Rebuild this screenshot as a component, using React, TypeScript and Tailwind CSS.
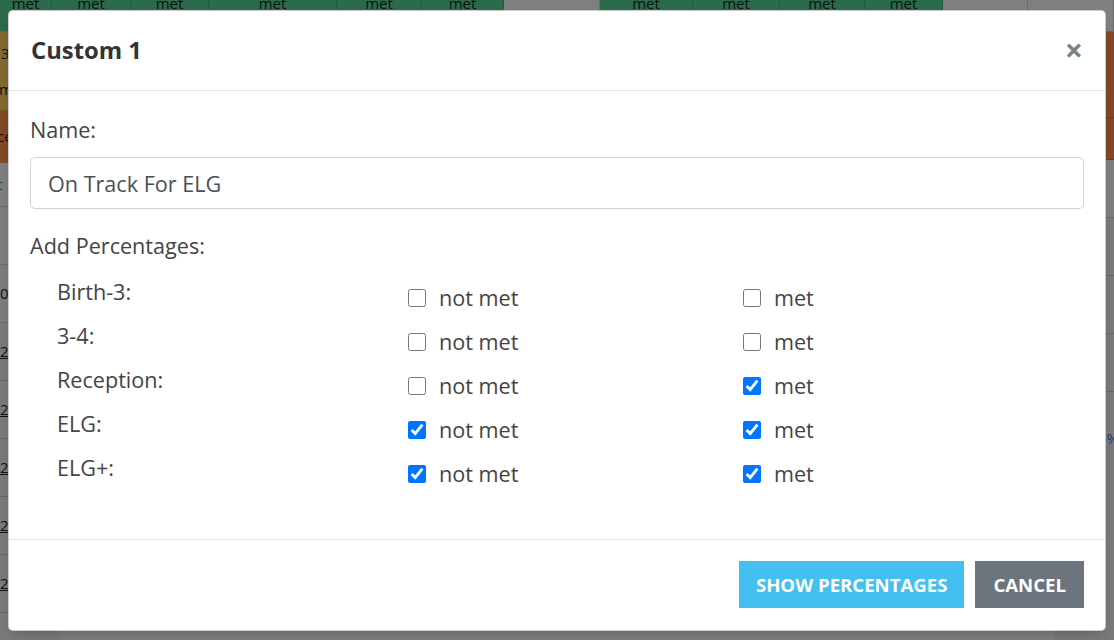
import React from 'react'

const topCells = [
  { w: 'w-[52px]', green: true },
  { w: 'w-[79px]', green: true },
  { w: 'w-[78px]', green: true },
  { w: 'w-[128px]', green: true },
  { w: 'w-[85px]', green: true },
  { w: 'w-[82px]', green: true },
  { w: 'w-[96px]', green: false },
  { w: 'w-[93px]', green: true },
  { w: 'w-[87px]', green: true },
  { w: 'w-[85px]', green: true },
  { w: 'w-[78px]', green: true },
  { w: 'w-[85px]', green: false },
  { w: 'w-[86px]', green: false },
]

const rows = [
  { label: 'Birth-3:', notMet: false, met: false },
  { label: '3-4:', notMet: false, met: false },
  { label: 'Reception:', notMet: false, met: true },
  { label: 'ELG:', notMet: true, met: true },
  { label: 'ELG+:', notMet: true, met: true },
]

function Check({ checked, text }: { checked: boolean; text: string }) {
  return (
    <label className="flex items-center gap-[13px] leading-[32px]">
      <input type="checkbox" defaultChecked={checked} className="w-[18px] h-[18px] m-0" />
      <span>{text}</span>
    </label>
  )
}

function Backdrop() {
  return (
    <div className="flex flex-col">
      {/* top row of the table, scrolled partly out of view */}
      <div className="flex h-[32px] border-b border-black/20">
        {topCells.map((c, i) => (
          <div
            key={i}
            className={`${c.w} h-full border-r border-black/15 text-center text-[15px] leading-[15px] text-[#111] ${c.green ? 'bg-[#2b6a4b]' : 'bg-[#7f7f7f]'}`}
          >
            {c.green && <div className="-mt-[4px]">met</div>}
          </div>
        ))}
      </div>

      <div className="flex">
        {/* left column */}
        <div className="w-[60px] flex flex-col text-[15px] text-[#111]">
          <div className="h-[78px] bg-[#806a30] flex flex-col justify-between py-[12px] pl-[1px]">
            <span className="leading-[18px]">3</span>
            <span className="leading-[18px] -ml-[2px]">m</span>
          </div>
          <div className="h-[53px] bg-[#804a28] flex items-center -ml-[3px]">ce</div>
          <div className="h-[44px] bg-[#7f7f7f] border-b border-black/15 flex items-center text-[#1d3f6b] -ml-[3px]">t</div>
          <div className="h-[58px] bg-[#7f7f7f] border-b border-black/15"></div>
          <div className="h-[58px] bg-[#7d7d7d] border-b border-black/15 flex items-center">0</div>
          {[0, 1, 2, 3, 4].map((i) => (
            <div key={i} className="h-[58px] bg-[#7a7a7a] border-b border-black/15 flex items-center underline">
              2
            </div>
          ))}
          <div className="h-[40px] bg-[#7a7a7a]"></div>
        </div>

        <div className="flex-1 bg-[#7f7f7f]"></div>

        {/* right column */}
        <div className="w-[60px] flex flex-col text-[15px] text-[#1d3f6b]">
          <div className="h-[86px] bg-[#804a28] border-b border-black/20"></div>
          <div className="h-[42px] bg-[#804a28] border-b border-black/20"></div>
          <div className="h-[58px] bg-[#7f7f7f] border-b border-black/15"></div>
          <div className="h-[58px] bg-[#7a7a7a] border-b border-black/15"></div>
          <div className="h-[58px] bg-[#7a7a7a] border-b border-black/15"></div>
          <div className="h-[58px] bg-[#7a7a7a] border-b border-black/15"></div>
          <div className="h-[92px] bg-[#7a7a7a] flex items-center pl-[44px] whitespace-nowrap">0%</div>
          <div className="h-[200px] bg-[#7a7a7a]"></div>
        </div>
      </div>
    </div>
  )
}

export default function App() {
  return (
    <div className="relative w-[1114px] h-[640px] overflow-hidden bg-[#7f7f7f] font-['Open_Sans',sans-serif]">
      <Backdrop />

      {/* Modal */}
      <div className="absolute left-[8px] top-[10px] w-[1098px] bg-white rounded-[5px] border border-black/20 shadow-lg text-[#444] text-[21.6px]">
        {/* Header */}
        <div className="h-[80px] flex items-center justify-between pl-[22px] pr-[22px] border-b border-[#e3e3e3]">
          <h5 className="text-[23.8px] font-bold text-[#333] leading-[35px]">Custom 1</h5>
          <span className="text-[32px] font-bold leading-none text-black/50 -mt-[2px]">×</span>
        </div>

        {/* Body */}
        <div className="px-[21px] pt-[23px] pb-[48px]">
          <div className="leading-[32px] mb-[11px]">Name:</div>
          <input
            type="text"
            defaultValue="On Track For ELG"
            className="w-full h-[52px] border border-[#ced4da] rounded-[5px] px-[17px] text-[#495057] outline-none"
          />
          <div className="leading-[32px] mt-[21px] mb-[9px]">Add Percentages:</div>

          {rows.map((r) => (
            <div key={r.label} className="grid grid-cols-[351px_335px_1fr] h-[44px] pl-[27px]">
              <div className="leading-[32px] pt-[5px]">{r.label}</div>
              <div className="pt-[11px]">
                <Check checked={r.notMet} text="not met" />
              </div>
              <div className="pt-[11px]">
                <Check checked={r.met} text="met" />
              </div>
            </div>
          ))}
        </div>

        {/* Footer */}
        <div className="flex justify-end items-center gap-[11px] px-[21px] pt-[21px] pb-[22px] border-t border-[#e3e3e3]">
          <button className="h-[47px] px-[17px] bg-[#43c0f0] text-white font-bold text-[18.6px] uppercase">
            Show Percentages
          </button>
          <button className="h-[47px] px-[18px] bg-[#6c757d] text-white font-bold text-[18.6px] uppercase">
            Cancel
          </button>
        </div>
      </div>
    </div>
  )
}
